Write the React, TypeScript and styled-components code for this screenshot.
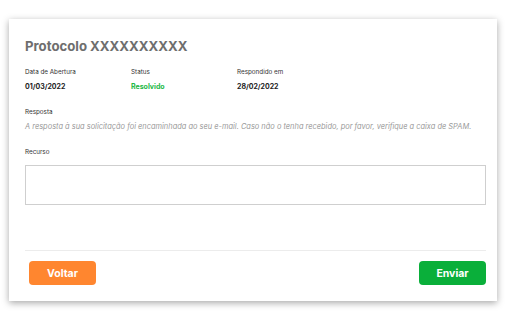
import React, { useState } from 'react';
import styled, { createGlobalStyle } from 'styled-components';

const GlobalStyle = createGlobalStyle`
  body {
    margin: 0;
    background: #ffffff;
    font-family: Inter, "Noto Sans", sans-serif;
  }
`;

const Page = styled.div`
  padding: 19px 16px 25px 9px;
`;

const Card = styled.div`
  width: 488px;
  box-sizing: border-box;
  padding: 18px 11px 16px 16px;
  background: #ffffff;
  box-shadow: 0 2px 7px rgba(0, 0, 0, 0.35);
  display: flex;
  flex-direction: column;
`;

const Title = styled.h1`
  margin: 0;
  font-size: 13.2px;
  line-height: 18px;
  font-weight: 700;
  color: #6e6e6e;
`;

const InfoRow = styled.div`
  display: grid;
  grid-template-columns: 106px 106px 1fr;
  margin-top: 13px;
`;

const Field = styled.div`
  display: flex;
  flex-direction: column;
  gap: 4px;
`;

const Label = styled.span`
  font-size: 6.3px;
  line-height: 9px;
  color: #333333;
`;

const Value = styled.span<{ $color?: string }>`
  font-size: 7px;
  line-height: 11px;
  font-weight: 700;
  color: ${(p) => p.$color || '#222222'};
`;

const Section = styled.div<{ $gap: number }>`
  display: flex;
  flex-direction: column;
  gap: ${(p) => p.$gap}px;
  margin-top: 16px;
`;

const Answer = styled.p`
  margin: 0;
  font-size: 7.45px;
  line-height: 11px;
  font-style: italic;
  white-space: nowrap;
  color: #9a9a9a;
`;

const TextArea = styled.textarea`
  height: 40px;
  box-sizing: border-box;
  border: 1.5px solid #cfcfcf;
  border-radius: 0;
  resize: none;
  padding: 4px;
  font-family: inherit;
  &:focus {
    outline: none;
  }
`;

const Divider = styled.hr`
  border: none;
  border-top: 1px solid #ececec;
  margin: 45px 0 10px;
`;

const Actions = styled.div`
  display: flex;
  justify-content: space-between;
  padding-left: 4px;
`;

const Button = styled.button<{ $bg: string }>`
  width: 67px;
  height: 24px;
  border: none;
  border-radius: 4px;
  background: ${(p) => p.$bg};
  color: #ffffff;
  font-family: Inter, "Noto Sans", sans-serif;
  font-size: 10.5px;
  font-weight: 700;
  cursor: pointer;
`;

const App: React.FC = () => {
  const [recurso, setRecurso] = useState('');

  return (
    <>
      <GlobalStyle />
      <Page>
        <Card>
          <Title>Protocolo XXXXXXXXXX</Title>
          <InfoRow>
            <Field>
              <Label>Data de Abertura</Label>
              <Value>01/03/2022</Value>
            </Field>
            <Field>
              <Label>Status</Label>
              <Value $color="#22b845">Resolvido</Value>
            </Field>
            <Field>
              <Label>Respondido em</Label>
              <Value>28/02/2022</Value>
            </Field>
          </InfoRow>
          <Section $gap={4}>
            <Label>Resposta</Label>
            <Answer>
              A resposta à sua solicitação foi encaminhada ao seu e-mail. Caso não o tenha recebido, por favor,
              verifique a caixa de SPAM.
            </Answer>
          </Section>
          <Section $gap={8}>
            <Label>Recurso</Label>
            <TextArea value={recurso} onChange={(e) => setRecurso(e.target.value)} />
          </Section>
          <Divider />
          <Actions>
            <Button $bg="#ff862f">Voltar</Button>
            <Button $bg="#0aaf3a">Enviar</Button>
          </Actions>
        </Card>
      </Page>
    </>
  );
};

export default App;
